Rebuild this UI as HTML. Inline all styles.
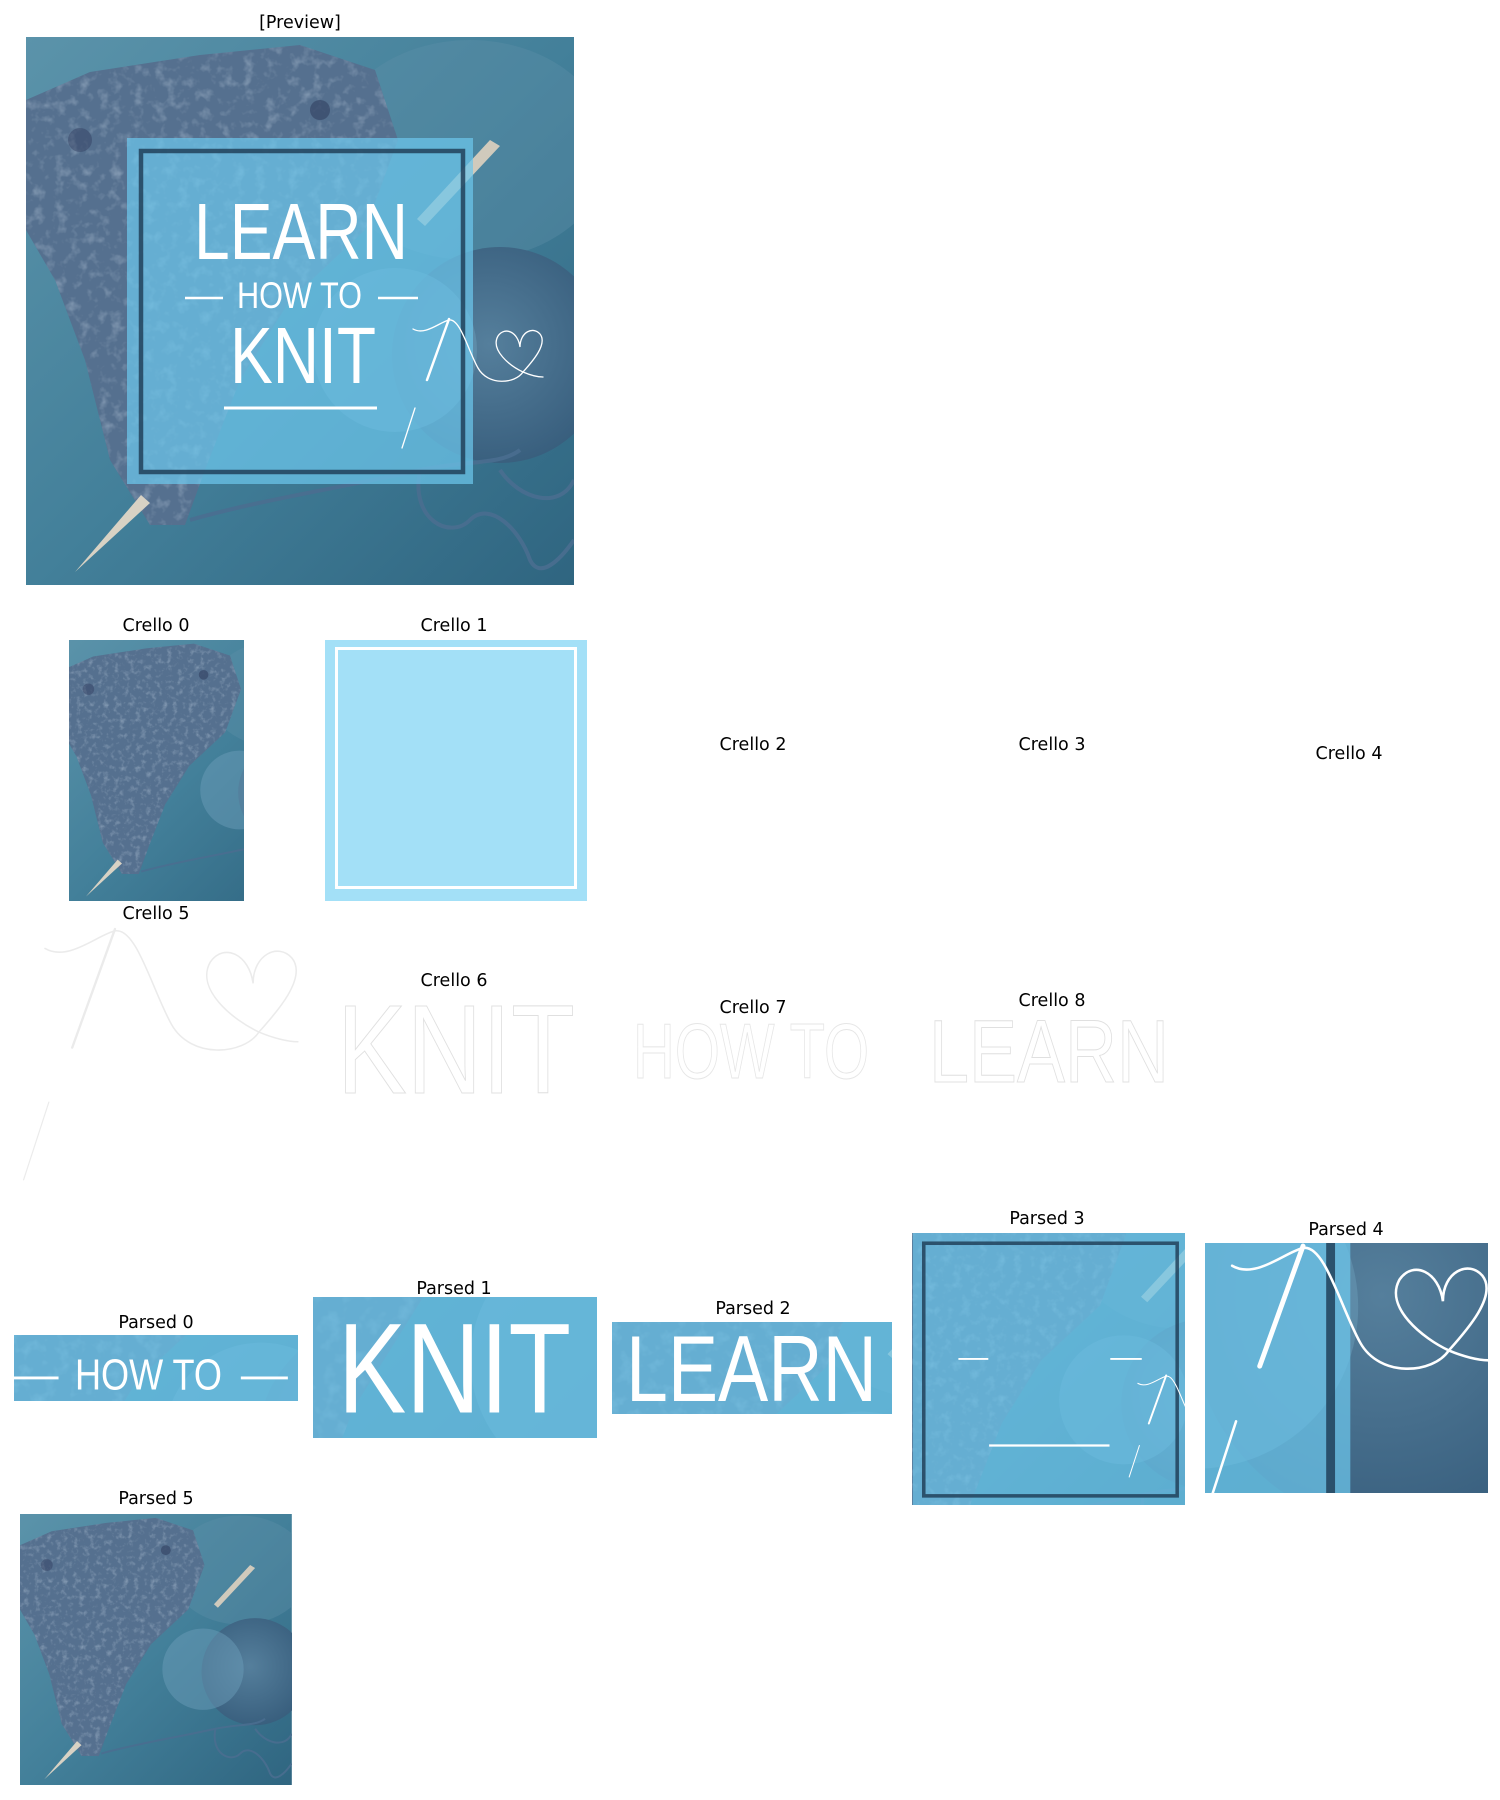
<!DOCTYPE html>
<html><head><meta charset="utf-8"><style>
html,body{margin:0;padding:0;background:#fff;}
svg{display:block}
.lb{font-family:"DejaVu Sans","Liberation Sans",sans-serif;font-size:17.5px;fill:#000;text-anchor:middle}
.tt{font-family:"Liberation Sans",sans-serif;fill:#fff}
</style></head><body>
<svg width="1500" height="1800" viewBox="0 0 1500 1800" xmlns="http://www.w3.org/2000/svg">
<defs>
  <linearGradient id="bg" x1="0" y1="0" x2="1" y2="1">
    <stop offset="0" stop-color="#5b93aa"/><stop offset="0.5" stop-color="#43809a"/><stop offset="1" stop-color="#2f6580"/>
  </linearGradient>
  <radialGradient id="ball" cx="0.45" cy="0.45" r="0.6">
    <stop offset="0" stop-color="#557f9c"/><stop offset="1" stop-color="#375d7c"/>
  </radialGradient>
  <filter id="fz" x="0" y="0" width="1" height="1">
    <feTurbulence type="fractalNoise" baseFrequency="0.09" numOctaves="3" seed="4"/>
    <feColorMatrix values="0 0 0 0 0.75  0 0 0 0 0.85  0 0 0 0 0.95  0 0 0 1.4 -0.7"/>
  </filter>
  <clipPath id="cpv"><rect x="26" y="37" width="548" height="548"/></clipPath>
  <clipPath id="csc"><path d="M26,100 L90,72 L200,55 L300,45 L375,70 L398,140 L365,230 L290,300 L240,380 L205,470 L185,525 L150,525 L110,460 L85,360 L55,280 L26,230 Z"/></clipPath>
  <g id="photo">
    <rect x="26" y="37" width="548" height="548" fill="url(#bg)"/>
    <ellipse cx="470" cy="150" rx="140" ry="110" fill="#5d8fa8" opacity="0.4"/>
    <path d="M26,100 L90,72 L200,55 L300,45 L375,70 L398,140 L365,230 L290,300 L240,380 L205,470 L185,525 L150,525 L110,460 L85,360 L55,280 L26,230 Z" fill="#55708f"/>
    <g clip-path="url(#csc)">
      <rect x="26" y="37" width="380" height="500" filter="url(#fz)" opacity="0.55"/>
      <circle cx="320" cy="110" r="10" fill="#2a3557" opacity="0.5"/>
      <circle cx="80" cy="140" r="12" fill="#2a3557" opacity="0.4"/>
    </g>
    <circle cx="500" cy="355" r="108" fill="url(#ball)"/>
    <circle cx="395" cy="350" r="82" fill="#6a9bb8" opacity="0.5"/>
    <g fill="none" stroke="#4a6e90" stroke-width="4" opacity="0.9">
      <path d="M190,520 C260,500 330,490 420,470 C470,460 500,465 520,450"/>
      <path d="M420,470 C410,520 450,540 470,520 C490,500 520,530 530,560 C540,580 560,560 574,540"/>
      <path d="M500,470 C520,500 560,510 574,480"/>
    </g>
    <path d="M75,572 L141,495 L150,503 Z" fill="#d8d2c4"/>
    <path d="M417,219 L490,140 L500,146 L425,226 Z" fill="#d0cabc"/>
  </g>
  <g id="scene">
    <use href="#photo"/>
    <rect x="127" y="138" width="346" height="346" fill="#6cc6ec" opacity="0.72"/>
    <rect x="141" y="151" width="322" height="321" fill="none" stroke="#1d3a52" stroke-width="4.5" opacity="0.8"/>
  </g>
  <g id="deco">
    <g stroke="#fff" stroke-width="2.5">
      <line x1="185" y1="298" x2="223" y2="298"/>
      <line x1="378" y1="298" x2="418" y2="298"/>
    </g>
    <line x1="224" y1="408" x2="377" y2="408" stroke="#fff" stroke-width="3"/>
    <g fill="none" stroke="#fff" stroke-linecap="round">
      <line x1="449" y1="319" x2="427" y2="380" stroke-width="2.5"/>
      <path d="M413,329 C425,336 440,322 449,320 C460,318 468,350 478,368 C488,386 515,384 523,372 C532,362 548,344 540,334 C533,326 520,332 520,347 C518,332 505,326 498,336 C490,350 510,366 523,372 C530,375 538,377 543,377" stroke-width="1.3"/>
      <line x1="415" y1="408" x2="402" y2="448" stroke-width="1.3"/>
    </g>
  </g>
  <g id="txt">
    <text class="tt" x="194" y="259" font-size="80" textLength="214" lengthAdjust="spacingAndGlyphs">LEARN</text>
    <text class="tt" x="237" y="308" font-size="37" textLength="125" lengthAdjust="spacingAndGlyphs">HOW TO</text>
    <text class="tt" x="230" y="383" font-size="80" textLength="146" lengthAdjust="spacingAndGlyphs">KNIT</text>
  </g>
  <clipPath id="cc0"><rect x="69" y="640" width="175" height="261"/></clipPath>
  <clipPath id="cp0"><rect x="14" y="1335" width="284" height="66"/></clipPath>
  <clipPath id="cp1"><rect x="313" y="1297" width="284" height="141"/></clipPath>
  <clipPath id="cp2"><rect x="612" y="1322" width="280" height="92"/></clipPath>
  <clipPath id="cp3"><rect x="912" y="1233" width="273" height="272"/></clipPath>
  <clipPath id="cp4"><rect x="1205" y="1243" width="283" height="250"/></clipPath>
  <clipPath id="cp5"><rect x="20" y="1514" width="272" height="271"/></clipPath>
</defs>

<text class="lb" x="300" y="28">[Preview]</text>
<g clip-path="url(#cpv)"><use href="#scene"/><use href="#deco"/><use href="#txt"/></g>

<text class="lb" x="156" y="631">Crello 0</text>
<g clip-path="url(#cc0)"><g transform="translate(50,622) scale(0.48)"><use href="#photo"/></g></g>

<text class="lb" x="454" y="631">Crello 1</text>
<rect x="325" y="640" width="262" height="261" fill="#a3e0f7"/>
<rect x="336.5" y="648.5" width="239" height="239" fill="none" stroke="#fff" stroke-width="3"/>

<text class="lb" x="753" y="750">Crello 2</text>
<text class="lb" x="1052" y="750">Crello 3</text>
<text class="lb" x="1349" y="759">Crello 4</text>

<text class="lb" x="156" y="919">Crello 5</text>
<g transform="translate(-758.3,308.5) scale(1.945)" fill="none" stroke="#ebebeb" stroke-linecap="round">
  <line x1="449" y1="319" x2="427" y2="380" stroke-width="1.2"/>
  <path d="M413,329 C425,336 440,322 449,320 C460,318 468,350 478,368 C488,386 515,384 523,372 C532,362 548,344 540,334 C533,326 520,332 520,347 C518,332 505,326 498,336 C490,350 510,366 523,372 C530,375 538,377 543,377" stroke-width="0.8"/>
  <line x1="415" y1="408" x2="402" y2="448" stroke-width="0.6"/>
</g>

<text class="lb" x="454" y="986">Crello 6</text>
<text class="tt" x="337" y="1093" font-size="126" textLength="238" lengthAdjust="spacingAndGlyphs" stroke="#e0e0e0" stroke-width="1">KNIT</text>
<text class="lb" x="753" y="1013">Crello 7</text>
<text class="tt" x="633" y="1078" font-size="78" textLength="236" lengthAdjust="spacingAndGlyphs" stroke="#e6e6e6" stroke-width="1">HOW TO</text>
<text class="lb" x="1052" y="1006">Crello 8</text>
<text class="tt" x="929" y="1082" font-size="89" textLength="240" lengthAdjust="spacingAndGlyphs" stroke="#e0e0e0" stroke-width="1">LEARN</text>

<text class="lb" x="156" y="1328">Parsed 0</text>
<g clip-path="url(#cp0)"><g transform="translate(-203.7,1027.5) scale(1.176)"><use href="#scene"/><use href="#deco"/><use href="#txt"/></g></g>

<text class="lb" x="454" y="1294">Parsed 1</text>
<g clip-path="url(#cp1)"><g transform="translate(-29.1,801.3) scale(1.596)"><use href="#scene"/><use href="#deco"/><use href="#txt"/></g></g>

<text class="lb" x="753" y="1314">Parsed 2</text>
<g clip-path="url(#cp2)"><g transform="translate(398.4,1097.2) scale(1.173)"><use href="#scene"/><use href="#deco"/><use href="#txt"/></g></g>

<text class="lb" x="1047" y="1224">Parsed 3</text>
<g clip-path="url(#cp3)"><g transform="translate(812.8,1124.4) scale(0.787)"><use href="#scene"/><use href="#deco"/></g></g>

<text class="lb" x="1346" y="1235">Parsed 4</text>
<g clip-path="url(#cp4)"><g transform="translate(418.5,617.6) scale(1.97)"><use href="#scene"/><use href="#deco"/></g></g>

<text class="lb" x="156" y="1504">Parsed 5</text>
<g clip-path="url(#cp5)"><g transform="translate(7.1,1495.6) scale(0.496)"><use href="#photo"/></g></g>
</svg>
</body></html>
